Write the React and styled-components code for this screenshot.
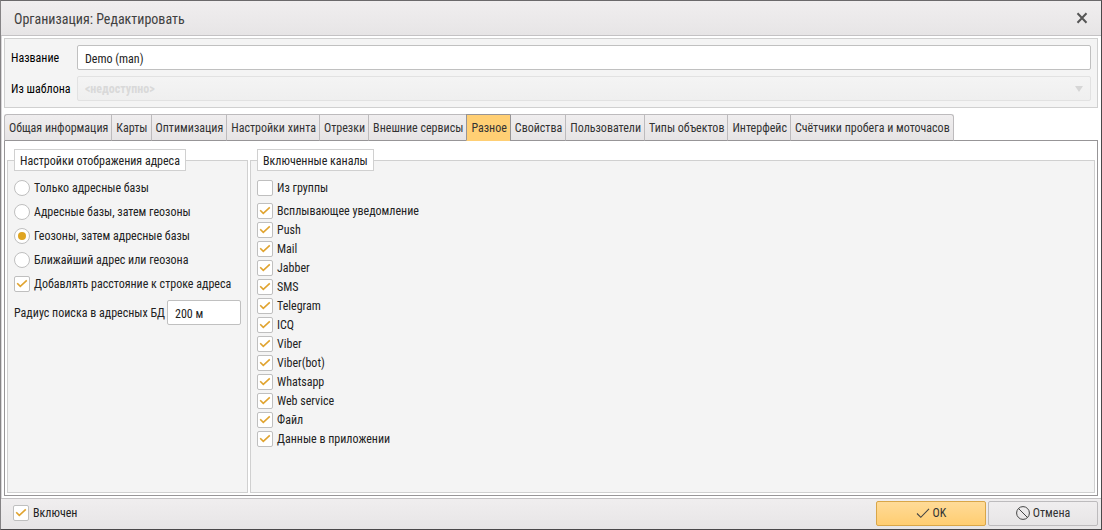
import { useState } from 'react';
import styled, { createGlobalStyle } from 'styled-components';

const GlobalStyle = createGlobalStyle`
  *, *::before, *::after {
    box-sizing: border-box;
  }
  body {
    margin: 0;
    background: #fff;
  }
  body, button, input, select {
    font-family: "Roboto Condensed", "Liberation Sans Narrow", Roboto, sans-serif;
    font-size: 12px;
    line-height: 16px;
    color: #222;
  }
`;

const Window = styled.div`
  display: flex;
  flex-direction: column;
  min-height: 100vh;
  border: 1px solid #4a484a;
  border-top-color: #6b696b;
  border-left-color: #858385;
`;

const TitleBar = styled.header`
  display: flex;
  align-items: center;
  justify-content: space-between;
  height: 35px;
  padding: 0 11px 0 13px;
  background: linear-gradient(#f0eeef, #e7e5e6);
  border-bottom: 1px solid #c4c2c4;
`;

const Title = styled.h1`
  margin: 0;
  padding-top: 2px;
  font-size: 14px;
  line-height: 20px;
  font-weight: 400;
  color: #404040;
`;

const CloseButton = styled.button`
  display: flex;
  padding: 2px;
  border: 0;
  background: none;
  color: #555;
`;

const Body = styled.main`
  display: flex;
  flex: 1;
  flex-direction: column;
  padding: 2px 3px 2px 2px;
  border-left: 1px solid #d9d7d9;
  background: #fff;
`;

const Header = styled.section`
  display: grid;
  grid-template-columns: 66px 1fr;
  align-items: center;
  row-gap: 6px;
  padding: 6px;
  border: 1px solid #d0d0d0;
  background: #f4f4f4;
  color: #000;
`;

const TextInput = styled.input`
  width: ${(p) => p.$width || '100%'};
  height: 25px;
  padding: 2px 7px 0;
  border: 1px solid #c0c0c0;
  border-radius: 2px;
  background: #fff;
`;

const SelectBox = styled.div`
  display: grid;
  align-items: center;

  > * {
    grid-area: 1 / 1;
  }
  svg {
    justify-self: end;
    margin-right: 8px;
    pointer-events: none;
  }
`;

const Select = styled.select`
  appearance: none;
  width: 100%;
  height: 25px;
  padding: 0 7px;
  border: 1px solid #e2e2e2;
  border-radius: 2px;
  background: linear-gradient(#f4f4f4, #efefef);
  font-weight: 700;
  color: #d9d9d9;
  opacity: 1;
`;

const TabList = styled.div`
  display: flex;
  margin-top: 6px;
`;

const Tab = styled.button`
  height: 27px;
  margin-bottom: -1px;
  padding: 1px 3px 0 4px;
  border: 1px solid #bdbbbd;
  border-right-width: 0;
  border-bottom-color: ${(p) => (p.$active ? '#ffcf74' : '#979597')};
  background: ${(p) => (p.$active ? '#ffcf74' : 'linear-gradient(#f0eeef, #e6e4e5)')};
  color: #333;
  white-space: nowrap;
  z-index: 1;

  &:first-child {
    border-top-left-radius: 3px;
  }
  &:last-child {
    border-right-width: 1px;
    border-top-right-radius: 3px;
  }
  &[aria-selected='true'] {
    border-top-color: #979597;
    border-left-color: #979597;
  }
  &[aria-selected='true'] + & {
    border-left-color: #979597;
  }
`;

const TabPanel = styled.div`
  display: flex;
  flex: 1;
  gap: 2px;
  padding: 8px 2px 2px;
  border: 1px solid #979597;
`;

const Group = styled.fieldset`
  flex: ${(p) => (p.$grow ? '1' : '0 0 241px')};
  min-width: 0;
  margin: 0;
  padding: 5px 6px;
  border: 1px solid #d0d0d0;
  background: #f4f4f4;
`;

const Legend = styled.legend`
  height: 22px;
  padding: 3px 5px 0;
  border: 1px solid #d0d0d0;
  background: #fff;
`;

const Option = styled.label`
  display: flex;
  align-items: center;
  gap: 4px;
  height: ${(p) => (p.$dense ? 19 : 24)}px;
`;

const ChannelList = styled.div`
  padding-top: 1px;
`;

const Mark = styled.span`
  display: grid;

  > * {
    grid-area: 1 / 1;
  }
  svg {
    pointer-events: none;
  }
`;

const Tick = styled.input`
  appearance: none;
  width: 16px;
  height: 16px;
  margin: 0;
  border: 1px solid #bfbfbf;
  border-radius: ${(p) => (p.type === 'radio' ? '50%' : '2px')};
  background: #fff;

  & + svg {
    visibility: hidden;
  }
  &:checked + svg {
    visibility: visible;
  }
`;

const RadiusRow = styled.label`
  display: flex;
  align-items: center;
  justify-content: space-between;
  margin-top: 4px;
  white-space: nowrap;
`;

const Footer = styled.footer`
  display: flex;
  align-items: center;
  justify-content: space-between;
  height: 31px;
  padding: 0 3px 2px 12px;
  background: linear-gradient(#f0eeef, #e7e5e6);
  border-top: 1px solid #c4c2c4;
`;

const Actions = styled.div`
  display: flex;
  gap: 2px;
`;

const ActionButton = styled.button`
  display: flex;
  align-items: center;
  justify-content: center;
  gap: 3px;
  width: 110px;
  height: 25px;
  padding: 0;
  border: 1px solid ${(p) => (p.$primary ? '#d9a648' : '#bdbbbd')};
  border-radius: 2px;
  background: ${(p) => (p.$primary ? 'linear-gradient(#ffdb98, #ffcd71)' : 'linear-gradient(#f0eeef, #e7e5e6)')};
  color: #333;
`;

const TABS = [
  'Общая информация',
  'Карты',
  'Оптимизация',
  'Настройки хинта',
  'Отрезки',
  'Внешние сервисы',
  'Разное',
  'Свойства',
  'Пользователи',
  'Типы объектов',
  'Интерфейс',
  'Счётчики пробега и моточасов',
];

const ADDRESS_MODES = [
  'Только адресные базы',
  'Адресные базы, затем геозоны',
  'Геозоны, затем адресные базы',
  'Ближайший адрес или геозона',
];

const CHANNELS = [
  'Всплывающее уведомление',
  'Push',
  'Mail',
  'Jabber',
  'SMS',
  'Telegram',
  'ICQ',
  'Viber',
  'Viber(bot)',
  'Whatsapp',
  'Web service',
  'Файл',
  'Данные в приложении',
];

function Checkbox({ label, dense, ...rest }) {
  return (
    <Option $dense={dense}>
      <Mark>
        <Tick type="checkbox" {...rest} />
        <svg width="16" height="16" viewBox="0 0 16 16" fill="none" stroke="#e0a32e" strokeWidth="1.6">
          <path d="M3.2 7.2 6.3 10.3 12.8 4.4" />
        </svg>
      </Mark>
      {label}
    </Option>
  );
}

function Radio({ label, ...rest }) {
  return (
    <Option>
      <Mark>
        <Tick type="radio" {...rest} />
        <svg width="16" height="16" viewBox="0 0 16 16" fill="#dfa522">
          <circle cx="8" cy="8" r="4" />
        </svg>
      </Mark>
      {label}
    </Option>
  );
}

function App() {
  const [tab, setTab] = useState('Разное');

  return (
    <>
      <GlobalStyle />
      <Window>
        <TitleBar>
          <Title>Организация: Редактировать</Title>
          <CloseButton type="button" aria-label="Закрыть">
            <svg width="12" height="12" viewBox="0 0 12 12" stroke="currentColor" strokeWidth="2">
              <path d="M1.5 1.2 10.5 10.8M10.5 1.2 1.5 10.8" />
            </svg>
          </CloseButton>
        </TitleBar>
        <Body>
          <Header>
            <label htmlFor="name">Название</label>
            <TextInput id="name" defaultValue="Demo (man)" />
            <label htmlFor="template">Из шаблона</label>
            <SelectBox>
              <Select id="template" disabled>
                <option>&lt;недоступно&gt;</option>
              </Select>
              <svg width="8" height="6" viewBox="0 0 8 6" fill="#d6d6d6">
                <path d="M0 0h8L4 6z" />
              </svg>
            </SelectBox>
          </Header>
          <TabList role="tablist">
            {TABS.map((name) => (
              <Tab
                key={name}
                type="button"
                role="tab"
                aria-selected={name === tab}
                $active={name === tab}
                onClick={() => setTab(name)}
              >
                {name}
              </Tab>
            ))}
          </TabList>
          <TabPanel role="tabpanel">
            <Group>
              <Legend>Настройки отображения адреса</Legend>
              {ADDRESS_MODES.map((mode, i) => (
                <Radio key={mode} name="mode" label={mode} defaultChecked={i === 2} />
              ))}
              <Checkbox label="Добавлять расстояние к строке адреса" defaultChecked />
              <RadiusRow>
                Радиус поиска в адресных БД
                <TextInput $width="74px" defaultValue="200 м" />
              </RadiusRow>
            </Group>
            <Group $grow>
              <Legend>Включенные каналы</Legend>
              <Checkbox label="Из группы" />
              <ChannelList>
                {CHANNELS.map((channel) => (
                  <Checkbox key={channel} label={channel} dense defaultChecked />
                ))}
              </ChannelList>
            </Group>
          </TabPanel>
        </Body>
        <Footer>
          <Checkbox label="Включен" defaultChecked />
          <Actions>
            <ActionButton type="button" $primary>
              <svg width="14" height="14" viewBox="0 0 14 14" fill="none" stroke="#444" strokeWidth="1.1">
                <path d="M1 7.5 4.8 11.3 13 2.8" />
              </svg>
              OK
            </ActionButton>
            <ActionButton type="button">
              <svg width="14" height="14" viewBox="0 0 14 14" fill="none" stroke="#444" strokeWidth="1">
                <circle cx="7" cy="7" r="6.4" />
                <path d="M2.5 2.5 11.5 11.5" />
              </svg>
              Отмена
            </ActionButton>
          </Actions>
        </Footer>
      </Window>
    </>
  );
}

export default App;
